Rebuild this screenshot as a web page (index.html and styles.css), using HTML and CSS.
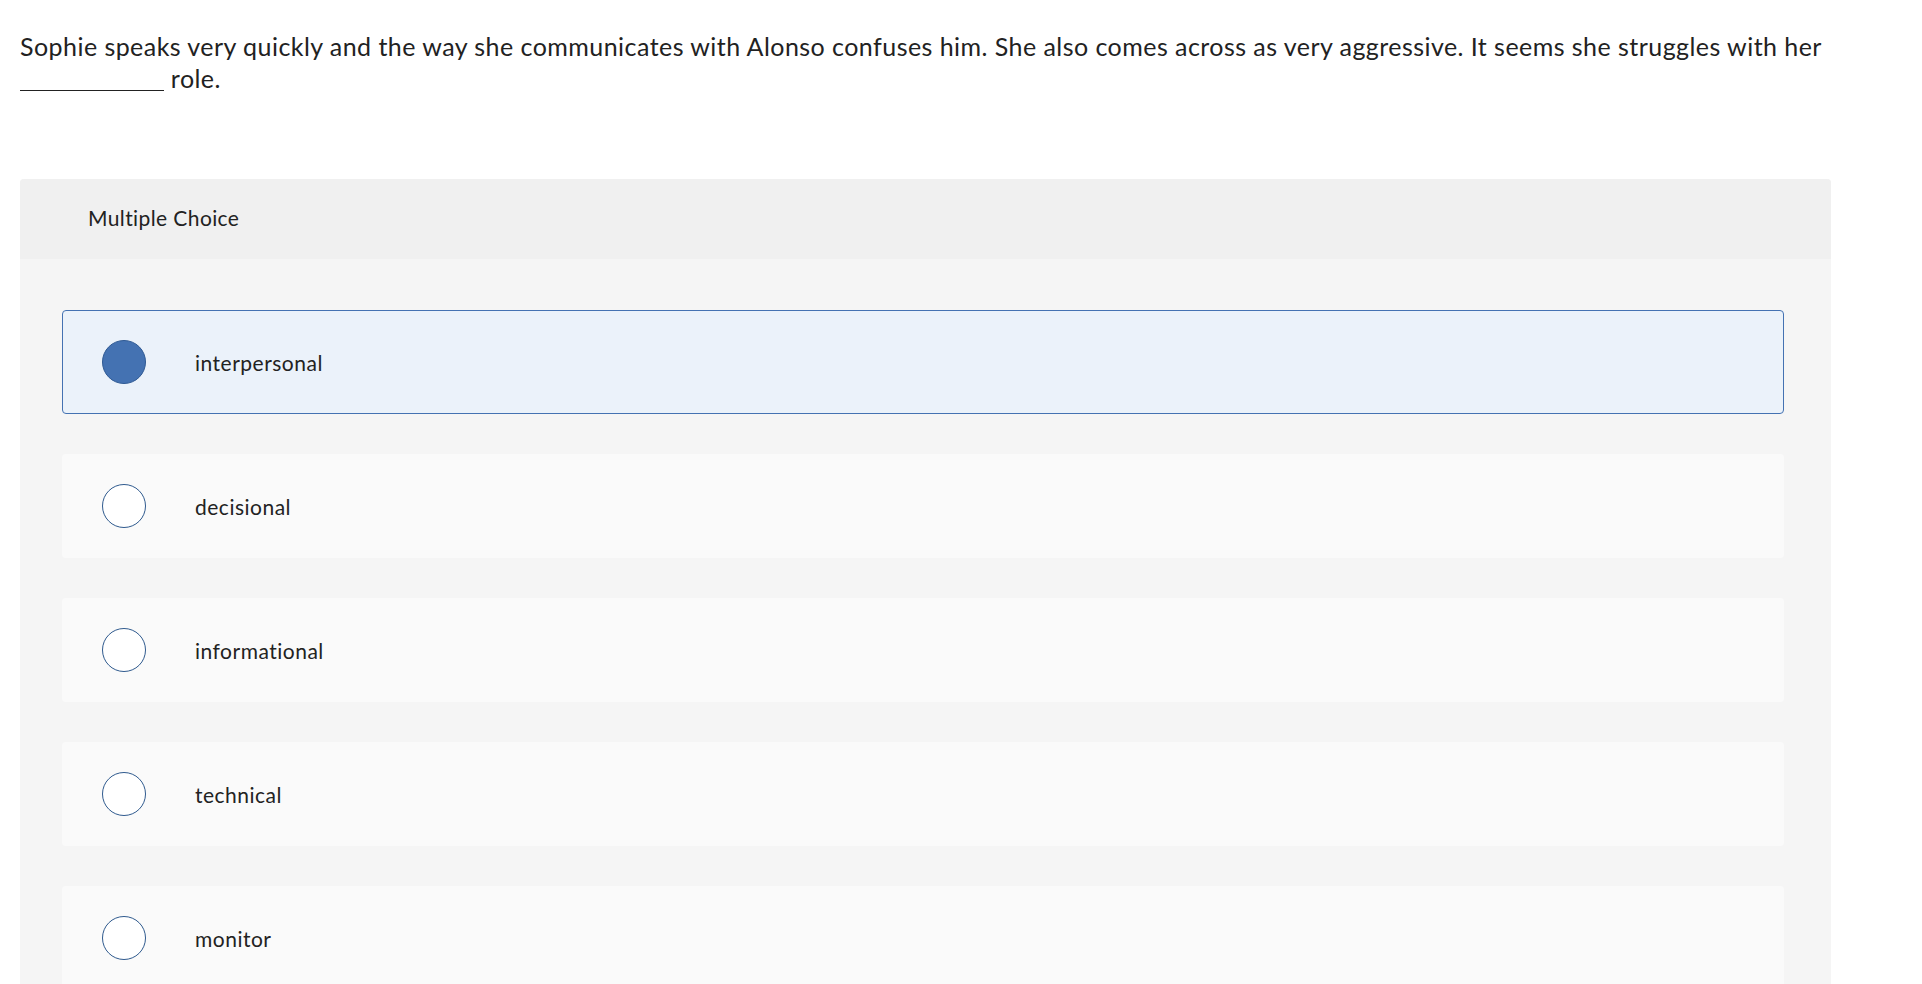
FILE: index.html
```html
<!DOCTYPE html>
<html lang="en">
<head>
    <meta charset="UTF-8">
    <meta name="viewport" content="width=device-width, initial-scale=1.0">
    <title>Multiple Choice</title>
    <link rel="stylesheet" href="styles.css">
</head>
<body>
    <div class="page">
        <p class="question">
            Sophie speaks very quickly and the way she communicates with Alonso confuses him. She also comes across as very aggressive. It seems she struggles with her
            <span class="blank"></span> role.
        </p>

        <div class="choice-box">
            <div class="choice-header">Multiple Choice</div>

            <div class="choice-list">
                <label class="choice selected">
                    <span class="radio"></span>
                    <span class="choice-text">interpersonal</span>
                </label>
                <label class="choice">
                    <span class="radio"></span>
                    <span class="choice-text">decisional</span>
                </label>
                <label class="choice">
                    <span class="radio"></span>
                    <span class="choice-text">informational</span>
                </label>
                <label class="choice">
                    <span class="radio"></span>
                    <span class="choice-text">technical</span>
                </label>
                <label class="choice">
                    <span class="radio"></span>
                    <span class="choice-text">monitor</span>
                </label>
            </div>
        </div>
    </div>
</body>
</html>
```

FILE: styles.css
```css
:root {
    --text-color: #222222;
    --header-bg: #f0f0f0;
    --box-bg: #f5f5f5;
    --card-bg: #fafafa;
    --selected-bg: #ebf2fa;
    --accent: #4472b2;
    --radio-border: #2f5a8e;
}

* {
    margin: 0;
    padding: 0;
    box-sizing: border-box;
}

body {
    font-family: Lato, 'Open Sans', Arial, sans-serif;
    color: var(--text-color);
    background-color: #ffffff;
}

.page {
    padding: 30px 91px 0 20px;
}

.question {
    font-size: 25px;
    line-height: 32px;
    letter-spacing: 0.45px;
    margin-bottom: 85px;
}

.blank {
    display: inline-block;
    width: 144px;
    height: 0;
    border-bottom: 1px solid var(--text-color);
    vertical-align: -3px;
}

.choice-box {
    background-color: var(--box-bg);
    border-radius: 4px 4px 0 0;
    overflow: hidden;
}

.choice-header {
    background-color: var(--header-bg);
    height: 80px;
    display: flex;
    align-items: center;
    padding: 0 0 3px 68px;
    font-size: 21px;
    letter-spacing: 0.4px;
}

.choice-list {
    display: flex;
    flex-direction: column;
    gap: 40px;
    padding: 51px 47px 40px 42px;
}

.choice {
    display: flex;
    align-items: center;
    height: 104px;
    padding-left: 39px;
    background-color: var(--card-bg);
    border: 1px solid transparent;
    border-radius: 4px;
    cursor: pointer;
}

.choice.selected {
    background-color: var(--selected-bg);
    border-color: var(--accent);
}

.radio {
    width: 44px;
    height: 44px;
    border-radius: 50%;
    border: 1.5px solid var(--radio-border);
    background-color: #ffffff;
    flex-shrink: 0;
    margin-right: 49px;
}

.choice.selected .radio {
    background-color: var(--accent);
    border-color: #2f5a94;
}

.choice-text {
    font-size: 21px;
    letter-spacing: 0.5px;
}
```
